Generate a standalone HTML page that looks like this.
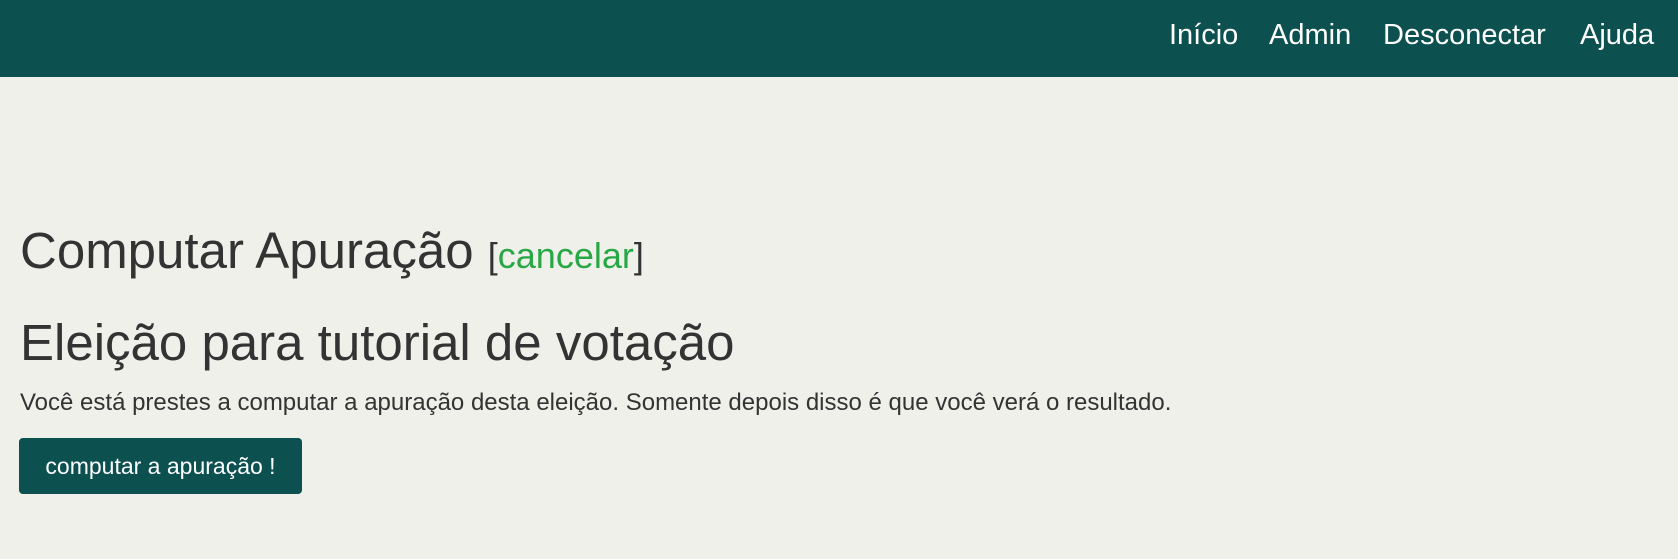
<!DOCTYPE html>
<html><head><meta charset="utf-8"><style>
body{margin:0;width:1678px;height:559px;background:#f0f0eb;font-family:"Liberation Sans",sans-serif;color:#333;overflow:hidden;position:relative}
.nav{position:absolute;left:0;top:0;width:1678px;height:77px;background:#0d5050}
.nav span{position:absolute;top:21px;color:#fff;font-size:29px;line-height:1;white-space:nowrap}
.t{position:absolute;left:20px;white-space:nowrap;line-height:1}
.h1{top:225px;font-size:51px;color:#333}
.h1 small{font-size:36px;color:#333}
.h1 small a{color:#28a745;text-decoration:none}
.h2{top:317px;font-size:51px}
.p{top:391px;font-size:24px}
.btn{position:absolute;left:19px;top:438px;width:283px;height:56px;background:#0d5050;border-radius:4px;color:#fff;font-size:23px;line-height:56px;text-align:center}
</style></head><body>
<div class="nav">
<span style="left:1169px">Início</span>
<span style="left:1269px">Admin</span>
<span style="left:1383px">Desconectar</span>
<span style="left:1580px">Ajuda</span>
</div>
<div class="t h1">Computar Apuração <small>[<a>cancelar</a>]</small></div>
<div class="t h2">Eleição para tutorial de votação</div>
<div class="t p">Você está prestes a computar a apuração desta eleição. Somente depois disso é que você verá o resultado.</div>
<div class="btn">computar a apuração !</div>
</body></html>
